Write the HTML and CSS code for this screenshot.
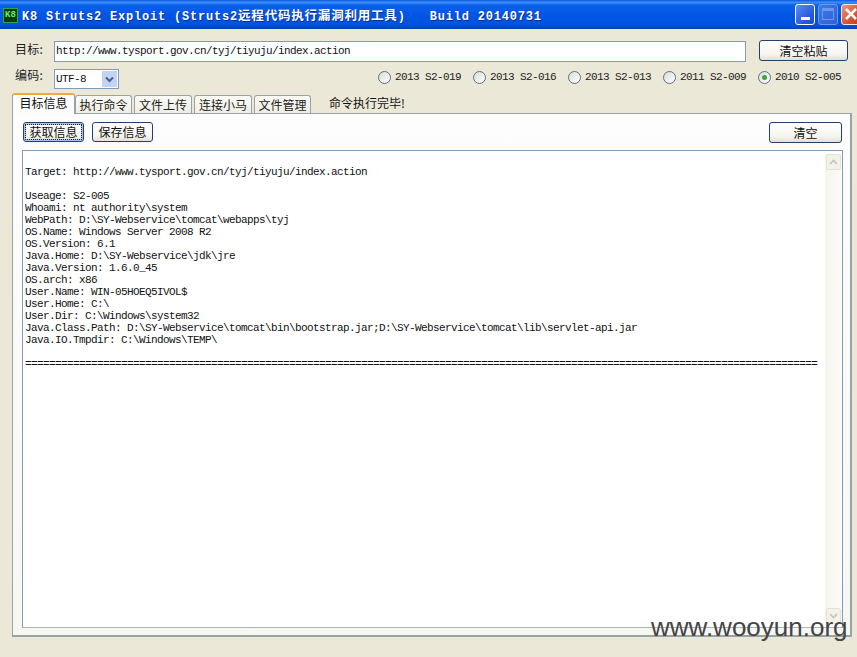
FILE: index.html
```html
<!DOCTYPE html>
<html lang="zh-CN">
<head>
<meta charset="utf-8">
<title>K8 Struts2 Exploit</title>
<link rel="stylesheet" href="styles.css">
</head>
<body>
<div class="window">
  <header class="titlebar">
    <span class="appicon">K8</span>
    <span class="title">K8 Struts2 Exploit (Struts2<span class="title-cjk">远程代码执行漏洞利用工具</span>)   Build 20140731</span>
    <div class="winbtns">
      <span class="wb wb-min"><i></i></span>
      <span class="wb wb-max"><i></i></span>
      <span class="wb wb-close"><svg width="14" height="14" viewBox="0 0 14 14"><path d="M2 2 L12 12 M12 2 L2 12" stroke="#fff" stroke-width="2.6" fill="none"/></svg></span>
    </div>
  </header>

  <div class="row row-url">
    <label class="lbl">目标:</label>
    <div class="urlbox">http://www.tysport.gov.cn/tyj/tiyuju/index.action</div>
    <button class="btn btn-paste">清空粘贴</button>
  </div>

  <div class="row row-enc">
    <label class="lbl">编码:</label>
    <div class="combo"><span>UTF-8</span><span class="combo-arrow"><svg width="9" height="7" viewBox="0 0 9 7"><path d="M1 1.5 L4.5 5 L8 1.5" stroke="#4d6185" stroke-width="2" fill="none"/></svg></span></div>
    <div class="radios">
      <span class="radio"><i></i>2013 S2-019</span>
      <span class="radio"><i></i>2013 S2-016</span>
      <span class="radio"><i></i>2013 S2-013</span>
      <span class="radio"><i></i>2011 S2-009</span>
      <span class="radio on"><i></i>2010 S2-005</span>
    </div>
  </div>

  <div class="tabs">
    <span class="tab active">目标信息</span>
    <span class="tab t1">执行命令</span>
    <span class="tab t2">文件上传</span>
    <span class="tab t3">连接小马</span>
    <span class="tab t4">文件管理</span>
    <span class="status">命令执行完毕!</span>
  </div>

  <section class="panel">
    <div class="toolbar">
      <button class="btn btn-a focus">获取信息</button>
      <button class="btn btn-b">保存信息</button>
      <button class="btn btn-c">清空</button>
    </div>
    <div class="output">
<pre class="log">

Target: http://www.tysport.gov.cn/tyj/tiyuju/index.action

Useage: S2-005
Whoami: nt authority\system
WebPath: D:\SY-Webservice\tomcat\webapps\tyj
OS.Name: Windows Server 2008 R2
OS.Version: 6.1
Java.Home: D:\SY-Webservice\jdk\jre
Java.Version: 1.6.0_45
OS.arch: x86
User.Name: WIN-05HOEQ5IVOL$
User.Home: C:\
User.Dir: C:\Windows\system32
Java.Class.Path: D:\SY-Webservice\tomcat\bin\bootstrap.jar;D:\SY-Webservice\tomcat\lib\servlet-api.jar
Java.IO.Tmpdir: C:\Windows\TEMP\

====================================================================================================================================</pre>
      <div class="scroll">
        <span class="sb"><svg width="9" height="6" viewBox="0 0 9 6"><path d="M1 5 L4.5 1.5 L8 5" stroke="#c3c6b8" stroke-width="1.6" fill="none"/></svg></span>
        <span class="sb"><svg width="9" height="6" viewBox="0 0 9 6"><path d="M1 1 L4.5 4.5 L8 1" stroke="#c3c6b8" stroke-width="1.6" fill="none"/></svg></span>
      </div>
    </div>
  </section>
</div>
<div class="watermark">www.wooyun.org</div>
</body>
</html>
```
FILE: styles.css
```css
* { box-sizing: border-box; }
html, body { margin: 0; padding: 0; }
body {
  width: 857px;
  height: 657px;
  overflow: hidden;
  position: relative;
  background: #ebe8d8;
  font-family: "Liberation Mono", "Noto Sans CJK SC", monospace;
  color: #111;
}
.window { height: 657px; display: flex; flex-direction: column; }

.titlebar {
  height: 29px;
  flex: none;
  display: flex;
  align-items: center;
  background: linear-gradient(180deg, #0a5ae0 0%, #3c8efb 8%, #0b60ea 18%, #0055e5 55%, #0053e0 85%, #0340b8 100%);
  padding: 2px 0 0 3px;
}
.appicon {
  width: 15px;
  height: 15px;
  background: #0c3a12;
  border: 1px solid #2fa83b;
  color: #66ee66;
  font: bold 9px/13px "Liberation Mono", monospace;
  text-align: center;
  flex: none;
}
.title {
  margin-left: 4px;
  color: #fff;
  font: bold 12px/16px "Liberation Mono", "Noto Sans CJK SC", monospace;
  letter-spacing: 0.8px;
  white-space: pre;
  text-shadow: 1px 1px 0 #0b2f90;
}
.title-cjk { font-family: "Noto Sans CJK SC", sans-serif; font-size: 12.5px; }
.winbtns { margin-left: auto; display: flex; gap: 3px; align-items: center; height: 21px; margin-top: -3px; width: 62px; overflow: hidden; flex: none; }
.wb {
  width: 20px;
  height: 21px;
  flex: none;
  border: 1px solid #fff;
  border-radius: 3px;
  display: flex;
  align-items: center;
  justify-content: center;
  position: relative;
}
.wb-min { background: linear-gradient(135deg, #5d8cf0, #2458d8 70%, #1e4fc8); }
.wb-min i { width: 9px; height: 3px; background: #fff; margin-top: 9px; }
.wb-max { background: linear-gradient(135deg, #3f78e8, #2a62d8); border-color: #6d97ee; }
.wb-max i { width: 12px; height: 12px; border: 1px solid #6d97ee; border-top-width: 3px; }
.wb-close { background: linear-gradient(135deg, #ee9a7a, #dd5030 60%, #c83d1c); border-color: #f3e8e0; }

.row { display: flex; flex: none; }
.lbl {
  font: 12px/14px "Noto Sans CJK SC", sans-serif;
  width: 39px;
  flex: none;
  color: #222;
  letter-spacing: 0.2px;
}
.row-url { height: 22px; margin-top: 11px; padding-left: 15px; align-items: flex-start; }
.row-url .lbl { margin-top: 2px; }
.urlbox {
  width: 692px;
  height: 21px;
  margin-top: 1px;
  background: #fff;
  border: 1px solid #7f9db9;
  font-size: 11px;
  letter-spacing: -0.6px;
  line-height: 19px;
  padding-left: 1px;
  white-space: pre;
}
.btn {
  font: 12px/16px "Noto Sans CJK SC", sans-serif;
  color: #111;
  background: linear-gradient(180deg, #ffffff 0%, #f6f5ee 70%, #e3e0d2 100%);
  border: 1px solid #24406e;
  border-radius: 3px;
  padding: 0;
  display: block;
  flex: none;
}
.btn-paste { width: 89px; height: 21px; margin-left: 13px; }
.row-enc { height: 21px; margin-top: 6px; padding-left: 15px; align-items: flex-start; }
.row-enc .lbl { margin-top: 0; }
.combo {
  width: 65px;
  height: 20px;
  margin-top: 1px;
  background: #fff;
  border: 1px solid #7f9db9;
  display: flex;
  align-items: center;
  justify-content: space-between;
  font-size: 11px;
  letter-spacing: -0.6px;
  padding-left: 1px;
}
.combo-arrow {
  width: 15px;
  height: 16px;
  margin-right: 1px;
  background: #c3d3f5;
  display: flex;
  align-items: center;
  justify-content: center;
}
.radios { display: flex; margin-left: 259px; margin-top: 2px; gap: 12px; }
.radio {
  display: flex;
  align-items: center;
  font-size: 11px;
  letter-spacing: -0.6px;
  line-height: 15px;
  color: #222;
  white-space: pre;
}
.radio i {
  width: 13px;
  height: 13px;
  border-radius: 50%;
  border: 1px solid #5a7186;
  background: linear-gradient(135deg, #dcdcd4, #ffffff);
  margin-right: 4px;
  position: relative;
  flex: none;
}
.radio.on i::after {
  content: "";
  position: absolute;
  left: 3px;
  top: 3px;
  width: 5px;
  height: 5px;
  border-radius: 50%;
  background: #3fa33a;
}

.tabs {
  height: 20px;
  flex: none;
  margin-top: 4px;
  padding-left: 12px;
  display: flex;
  align-items: flex-end;
  position: relative;
  z-index: 1;
}
.tab {
  font: 12px/16px "Noto Sans CJK SC", sans-serif;
  height: 18px;
  width: 57px;
  text-align: center;
  flex: none;
  background: linear-gradient(180deg, #fbfbf7, #efeee3);
  border: 1px solid #98a3a8;
  border-bottom: 0;
  border-radius: 3px 3px 0 0;
  margin-right: 2px;
  padding-top: 1px;
  color: #222;
}
.tab.active {
  width: 63px;
  margin-right: 0;
  background: #fcfcfe;
  border-color: #98a3a8;
  border-top: 2px solid #f2a93a;
  padding-top: 0;
  margin-bottom: -1px;
  height: 21px;
  color: #111;
}
.tab.t2, .tab.t3 { width: 58px; }
.tab.t4 { margin-right: 0; }
.status {
  font: 12px/16px "Noto Sans CJK SC", sans-serif;
  margin-left: 18px;
  height: 18px;
  color: #111;
}

.panel {
  width: 840px;
  height: 524px;
  margin-left: 12px;
  flex: none;
  background: linear-gradient(180deg, #fdfdfe, #f7f7f2);
  border: 1px solid #98a3a8;
  border-right-width: 2px;
  border-bottom-width: 2px;
  padding: 8px 0 0 9px;
}
.toolbar { display: flex; height: 21px; padding-left: 1px; }
.btn-a { width: 61px; height: 20px; }
.btn-a.focus { outline: 1px dotted #222; outline-offset: -3px; box-shadow: inset 0 0 0 2px #a9c4ee; }
.btn-b { width: 61px; height: 20px; margin-left: 8px; }
.btn-c { width: 73px; height: 21px; margin-left: 616px; }

.output {
  width: 821px;
  height: 478px;
  margin-top: 7px;
  background: #fff;
  border: 1px solid #7f9db9;
  border-bottom-color: #a8b6c2;
  display: flex;
  padding: 3px 0 3px 2px;
}
.log {
  margin: 0;
  width: 799px;
  font: 11px/12px "Liberation Mono", monospace;
  letter-spacing: -0.6px;
  color: #111;
  white-space: pre;
  overflow: hidden;
  flex: none;
}
.scroll {
  width: 17px;
  margin-left: 1px;
  flex: none;
  background: linear-gradient(90deg, #f6f5ee, #fbfbf8);
  display: flex;
  flex-direction: column;
  justify-content: space-between;
}
.sb {
  height: 16px;
  width: 15px;
  margin-left: 1px;
  background: #f3f2e9;
  border: 1px solid #e4e2d4;
  border-radius: 2px;
  display: flex;
  align-items: center;
  justify-content: center;
}

.watermark {
  position: absolute;
  left: 651px;
  top: 614px;
  font: 26px/26px "Liberation Sans", sans-serif;
  color: #444;
  white-space: pre;
}
```
